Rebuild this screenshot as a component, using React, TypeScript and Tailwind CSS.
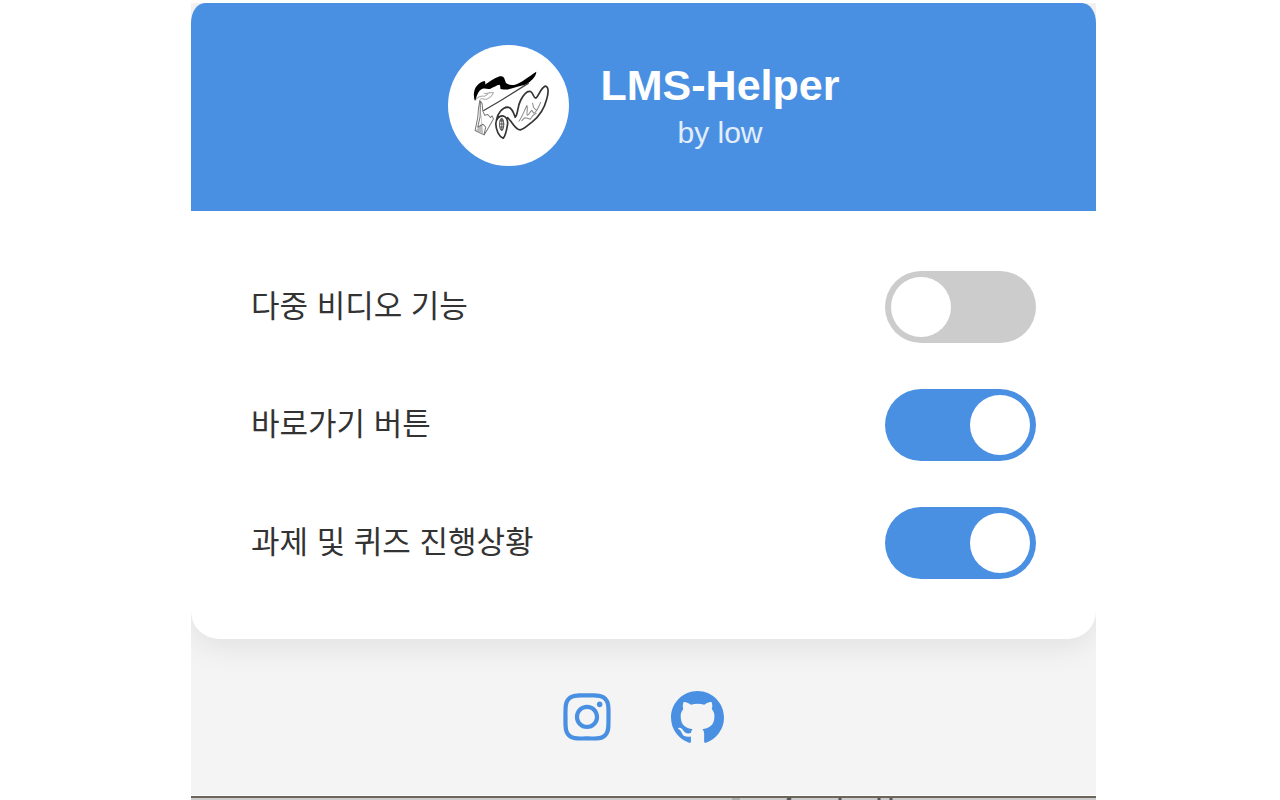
import React, { useState } from "react";
import { BsGithub } from "react-icons/bs";
import { FaInstagram } from "react-icons/fa";

const OPTIONS = [
  { id: "multi-video", label: "다중 비디오 기능", enabled: false },
  { id: "shortcut", label: "바로가기 버튼", enabled: true },
  { id: "progress", label: "과제 및 퀴즈 진행상황", enabled: true },
];

function Logo() {
  return (
    <svg
      viewBox="22 30 362 362"
      className="size-[121px] shrink-0 rounded-full bg-white"
      fill="none"
      strokeLinecap="round"
      strokeLinejoin="round"
      aria-hidden="true"
    >
      {/* Hair */}
      <path
        d="M102 196C97 182 99 163 108 153C115 144 124 139 132 138C134 142 134 145 133 148C145 141 159 129 173 125C181 122 187 124 190 129L195 143C202 150 213 151 225 148C244 142 264 124 286 110C287 119 278 130 267 140C257 149 244 152 232 154C218 158 203 165 188 163L179 162C178 156 179 151 176 149C168 150 158 157 149 161C139 163 131 158 124 162C116 165 109 176 105 195Z"
        fill="#000"
      />
      {/* Visor line */}
      <path d="M262 145L180 196L129 226" stroke="#444" strokeWidth="4" />
      {/* Face */}
      <path
        d="M106 192C113 185 119 181 129 183C134 185 138 178 146 172M118 192C125 188 132 196 140 191C148 188 153 183 158 173C149 169 139 178 130 174"
        stroke="#aaa"
        strokeWidth="3"
      />
      {/* Neck */}
      <path d="M116 205L122 265L106 285L127 295L122 242Z" fill="#bbb" />
      <path
        d="M117 196L113 222L111 247L103 286L130 299L144 276L158 251L154 242L149 247L141 238L132 240L126 227L124 205L119 198L118 245L111 276L127 267L135 276L130 296"
        stroke="#777"
        strokeWidth="3"
      />
      {/* Looping body */}
      <path
        d="M187 309C175 304 165 285 165 265C166 251 175 241 186 242C197 244 202 256 200 269C197 287 194 303 187 309ZM167 254C171 233 185 217 200 216C213 216 218 232 223 246C232 237 229 215 239 196C247 180 258 166 269 169C278 173 276 188 285 189C294 182 299 158 313 153C324 154 323 174 317 193C309 224 294 244 274 260C262 269 250 282 238 284C227 284 218 269 210 258L200 247"
        stroke="#333"
        strokeWidth="5"
      />
      <path
        d="M183 249C174 254 174 280 183 286C191 279 190 254 183 249ZM177 257H188M176 266H190M177 275H188M183 250V285"
        stroke="#555"
        strokeWidth="3"
      />
      <path
        d="M234 258C244 246 250 226 258 211C262 218 256 236 259 240C265 241 267 228 273 225C277 232 278 238 285 229C290 224 293 214 299 202M243 256L251 248L260 249L268 252L276 241L286 234M275 204L278 217L286 225"
        stroke="#888"
        strokeWidth="3"
      />
    </svg>
  );
}

type OptionRowProps = {
  id: string;
  label: string;
  enabled: boolean;
};

function OptionRow({ id, label, enabled }: OptionRowProps) {
  const [checked, setChecked] = useState(enabled);

  return (
    <div className="flex items-center justify-between">
      <label htmlFor={id} className="text-[31px] leading-[46px] text-[#333]">
        {label}
      </label>
      <input
        id={id}
        type="checkbox"
        role="switch"
        checked={checked}
        onChange={(e) => setChecked(e.target.checked)}
        className="flex h-[72px] w-[151px] shrink-0 cursor-pointer appearance-none items-center rounded-full bg-[#ccc] px-[6px] before:size-[60px] before:rounded-full before:bg-white before:content-[''] checked:justify-end checked:bg-[#4a90e2]"
      />
    </div>
  );
}

export default function App() {
  return (
    <div className="flex min-h-screen justify-center bg-white pt-[3px] pl-[7px] font-['Liberation_Sans','Noto_Sans_CJK_KR',sans-serif]">
      <div className="flex w-full max-w-[905px] flex-col overflow-hidden bg-[#f4f4f4]">
        <main className="overflow-hidden rounded-t-[14px_20px] rounded-b-[28px] bg-white shadow-[0_8px_30px_rgba(0,0,0,0.08)]">
          {/* Header */}
          <header className="flex items-center justify-center gap-[32px] bg-[#4a90e2] pt-[42px] pb-[45px] text-center text-white">
            <Logo />
            <div className="pt-[2px]">
              <h1 className="text-[43px] leading-[52px] font-bold">LMS-Helper</h1>
              <p className="text-[30px] leading-[44px] text-white/85">by low</p>
            </div>
          </header>

          {/* Options */}
          <section className="flex flex-col gap-[46px] p-[60px]">
            {OPTIONS.map((option) => (
              <OptionRow key={option.id} {...option} />
            ))}
          </section>
        </main>

        {/* Social links */}
        <footer className="flex flex-1 items-center justify-center gap-[60px] text-[#4a90e2]">
          <a href="#instagram" aria-label="Instagram">
            <FaInstagram className="h-[54px] w-[48px]" />
          </a>
          <a href="#github" aria-label="GitHub">
            <BsGithub className="size-[53px]" />
          </a>
        </footer>

        {/* Edge of the page underneath */}
        <div className="h-[5px] border-t border-white bg-[#ccc]">
          <svg viewBox="0 0 905 4" className="block h-[4px] w-full" aria-hidden="true">
            <path d="M0 1H905" stroke="#6b6659" strokeWidth="2" />
            <path d="M541 3H549" stroke="#aab0b0" strokeWidth="2" />
            <path d="M600 2L596 4M649 2V4M688 2V4M700 2V4" stroke="#55565c" strokeWidth="3" />
          </svg>
        </div>
      </div>
    </div>
  );
}
